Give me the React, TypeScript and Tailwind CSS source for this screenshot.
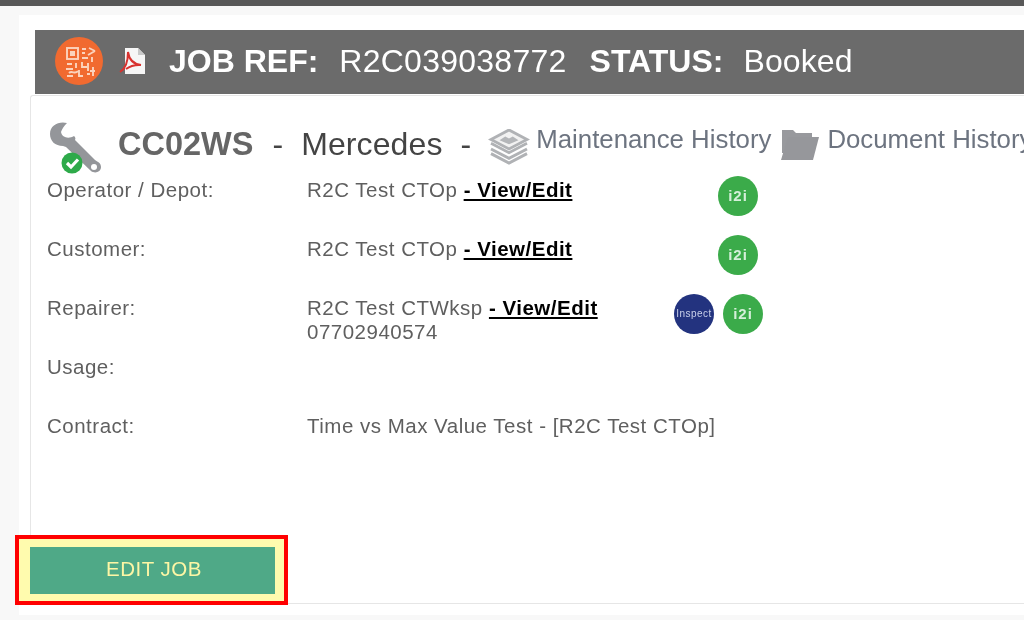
import React from "react";

const font = { fontFamily: '"Liberation Sans", Arial, sans-serif' };

function QrBadge() {
  return (
    <svg width="48" height="48" viewBox="0 0 48 48" className="shrink-0">
      <circle cx="24" cy="24" r="24" fill="#f16a30" />
      <g fill="none" stroke="#fbd3bd" strokeWidth="1.900">
        <rect x="12" y="11" width="11" height="11" />
        <path d="M27 12h4M27 16h3M34 11l6 3M33 18l7-4M27 21h6M37 20v5M27 25v5h5M33 26v8" />
        <path d="M12 27h5M21 26v5M11 32h7M14 36c3-3 6 2 9-2M24 33v6h4M12 39h6M32 37h3M38 30v9M35 34h5" />
      </g>
      <rect x="15" y="14" width="5" height="5" fill="#fbd3bd" />
    </svg>
  );
}

function PdfIcon() {
  return (
    <svg width="28" height="30" viewBox="0 0 28 30" className="shrink-0">
      <path d="M6 2h13l7 7v19H6z" fill="#f6f6f6" />
      <path d="M19 2v7h7z" fill="#c9c9c9" />
      <path
        d="M1 26c5-3 8-9 8-20 1 7 5 12 13 13-7-.5-11 1-15 4"
        fill="none"
        stroke="#d8322f"
        strokeWidth="2"
      />
    </svg>
  );
}

function Wrench() {
  return (
    <svg width="56" height="54" viewBox="0 0 56 54" className="shrink-0">
      <path
        d="M20 2C12 0 3 4 3 13c0 7 5 12 13 12l3 1 25 24c4 3 10 1 10-4 0-4-3-5-6-7L28 19c1-2 0-3-1-4-5 3-12 2-13-4 1-3 3-6 6-9z"
        fill="#94969a"
      />
      <circle cx="47" cy="46" r="3" fill="#fff" />
      <circle cx="25" cy="42" r="10.500" fill="#2eaa4a" />
      <path d="M20 42l4 4 7-7.500" fill="none" stroke="#fff" strokeWidth="3.200" />
    </svg>
  );
}

function Layers() {
  return (
    <svg width="42" height="36" viewBox="0 0 42 38" className="shrink-0">
      <path d="M21 1L40 11 21 21 2 11z" fill="#f2f2f2" stroke="#b0b2b5" strokeWidth="3" />
      <path d="M11 12l6-4 4 2 4-2 6 4-10 4z" fill="#b4b6b9" />
      <path d="M2 15l19 10 19-10M2 21l19 10 19-10M2 26l19 10 19-10" fill="none" stroke="#b0b2b5" strokeWidth="3" />
    </svg>
  );
}

function Folder() {
  return (
    <svg width="40" height="32" viewBox="0 0 40 32" className="shrink-0">
      <path d="M2 1h11l3 3h16v5H9L4 24H2z" fill="#98999d" />
      <path d="M8 8H39L33 31H1z" fill="#96979b" />
    </svg>
  );
}

function I2i() {
  return (
    <span className="flex h-10 w-10 shrink-0 items-center justify-center rounded-full bg-[#3bab4a] text-[15px] font-bold tracking-[1px] text-[#d5efda]">
      i2i
    </span>
  );
}

function Inspect() {
  return (
    <span className="flex h-10 w-10 shrink-0 items-center justify-center rounded-full bg-[#23337f] text-[10px] text-[#c9d0ea]">
      Inspect
    </span>
  );
}

function ViewEdit() {
  return (
    <>
      {" "}
      <a className="font-bold text-black underline decoration-2 underline-offset-2">- View/Edit</a>
    </>
  );
}

function Row({ label, children, badges }: { label: string; children?: React.ReactNode; badges?: React.ReactNode }) {
  return (
    <div className="relative flex h-[59px] pt-[2px] text-[20.500px] leading-[24px] tracking-[0.5px] text-[#5f5f5f]">
      <div className="w-[260px] shrink-0">{label}</div>
      <div className="min-w-0 whitespace-pre">{children}</div>
      {badges}
    </div>
  );
}

export default function App() {
  return (
    <div className="h-[620px] w-[1024px] overflow-hidden bg-[#f8f8f8] blur-[0.6px]" style={font}>
      <div className="h-[6px] bg-[#585858]" />
      <div className="relative ml-[19px] mt-[9px] h-[600px] bg-white pl-[11px] pt-[15px]">
        <div className="ml-[5px] flex h-[64px] items-center gap-[16px] bg-[#6b6b6b] pb-[2px] pl-[20px] text-[32px] text-white">
          <QrBadge />
          <PdfIcon />
          <div className="ml-[6px] flex items-center whitespace-pre">
            <b>JOB REF:</b>
            <span className="ml-[21px] tracking-[0.25px]">R2C039038772</span>
            <b className="ml-[23px]">STATUS:</b>
            <span className="ml-[20px] tracking-[0.1px]">Booked</span>
          </div>
        </div>
        <div className="mt-[1px] h-[509px] rounded-tl-[3px] border-b border-l border-t border-[#e6e6e6] pl-[16px] pt-[25px]">
          <div className="flex h-[55px] items-start whitespace-pre">
            <Wrench />
            <span className="ml-[15px] mt-[4px] text-[32.500px] font-bold leading-[38px] text-[#666666]">CC02WS</span>
            <span className="ml-[19px] mt-[4px] text-[32px] leading-[38px] tracking-[0.1px] text-[#444444]">-  Mercedes  -</span>
            <span className="ml-[17px] mt-[8px]"><Layers /></span>
            <span className="ml-[6px] mt-[2px] text-[25.800px] leading-[32px] text-[#6d7480]">Maintenance History</span>
            <span className="ml-[9px] mt-[8px]"><Folder /></span>
            <span className="ml-[7px] mt-[2px] text-[25.800px] leading-[32px] text-[#6d7480]">Document History</span>
          </div>
          <Row label="Operator / Depot:" badges={<div className="absolute left-[671px] top-0"><I2i /></div>}>
            R2C Test CTOp<ViewEdit />
          </Row>
          <Row label="Customer:" badges={<div className="absolute left-[671px] top-0"><I2i /></div>}>
            R2C Test CTOp<ViewEdit />
          </Row>
          <Row
            label="Repairer:"
            badges={
              <div className="absolute left-[627px] top-0 flex gap-[9px]">
                <Inspect />
                <I2i />
              </div>
            }
          >
            R2C Test CTWksp<ViewEdit />
            {"\n"}07702940574
          </Row>
          <Row label="Usage:" />
          <Row label="Contract:">Time vs Max Value Test - [R2C Test CTOp]</Row>
        </div>
        <div className="absolute left-[-4px] top-[520px] flex h-[70px] w-[273px] border-[4px] border-[#ff0000] bg-[#fffbae] pl-[11px] pt-[8px]">
          <button className="h-[47px] w-[245px] bg-[#4fa987] pb-[2px] pl-[3px] text-[20.500px] tracking-[0.5px] text-[#fdf6a5]">EDIT JOB</button>
        </div>
      </div>
    </div>
  );
}
